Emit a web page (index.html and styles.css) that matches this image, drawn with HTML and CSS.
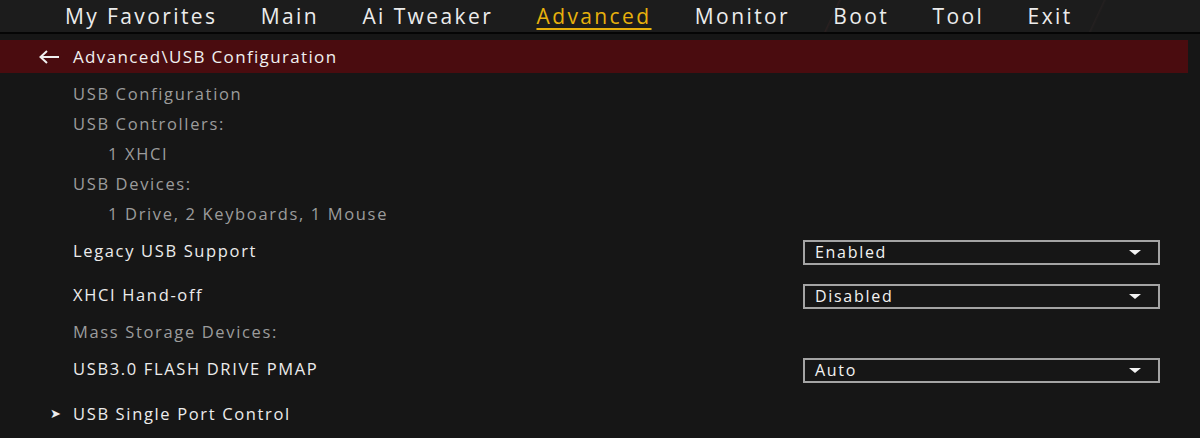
FILE: index.html
```html
<!DOCTYPE html>
<html lang="en">
<head>
  <meta charset="UTF-8">
  <meta name="viewport" content="width=device-width, initial-scale=1.0">
  <title>Advanced - USB Configuration</title>
  <link rel="stylesheet" href="styles.css">
</head>
<body>

  <nav class="tabs">
    <a class="tab">My Favorites</a>
    <a class="tab">Main</a>
    <a class="tab">Ai Tweaker</a>
    <a class="tab active">Advanced</a>
    <a class="tab">Monitor</a>
    <a class="tab">Boot</a>
    <a class="tab">Tool</a>
    <a class="tab">Exit</a>
  </nav>

  <div class="crumb">
    <svg class="back" width="22" height="14" viewBox="0 0 22 14">
      <path d="M21 7H3M9 1L2.5 7L9 13" fill="none" stroke="#f0f0f0" stroke-width="2"/>
    </svg>
    <span>Advanced\USB Configuration</span>
  </div>

  <div class="list">
    <div class="row info">USB Configuration</div>
    <div class="row info">USB Controllers:</div>
    <div class="row info sub">1 XHCI</div>
    <div class="row info">USB Devices:</div>
    <div class="row info sub">1 Drive, 2 Keyboards, 1 Mouse</div>

    <div class="row item">
      <span>Legacy USB Support</span>
      <div class="select">Enabled<i class="caret"></i></div>
    </div>
    <div class="row item">
      <span>XHCI Hand-off</span>
      <div class="select">Disabled<i class="caret"></i></div>
    </div>

    <div class="row info">Mass Storage Devices:</div>
    <div class="row item">
      <span>USB3.0 FLASH DRIVE PMAP</span>
      <div class="select">Auto<i class="caret"></i></div>
    </div>

    <div class="row link">
      <span class="arrow">&#x27A4;</span>
      <span>USB Single Port Control</span>
    </div>
  </div>

</body>
</html>
```

FILE: styles.css
```css
body {
  margin: 0;
  background-color: #161616;
  font-family: "Open Sans", "DejaVu Sans", sans-serif;
  color: #e6e6e6;
  overflow: hidden;
}

.tabs {
  display: flex;
  gap: 43.3px;
  height: 32px;
  padding-left: 65px;
  background-color: #1c1c1c;
  background-image:
    linear-gradient(115deg, transparent 0 760px, #2a2020 761px, transparent 763px),
    linear-gradient(115deg, transparent 0 1000px, #242020 1001px, transparent 1003px);
  border-bottom: 2px solid #050505;
}

.tab {
  font-size: 21px;
  line-height: 32px;
  color: #ececec;
  letter-spacing: 2.4px;
}

.tab.active {
  color: #e8b10c;
  text-decoration: underline;
  text-underline-offset: 4px;
  text-decoration-thickness: 2px;
}

.crumb {
  display: flex;
  align-items: center;
  gap: 13px;
  width: 1150px;
  height: 33px;
  margin-top: 6px;
  padding-left: 38px;
  background-color: #4a0c0f;
  font-size: 17px;
  letter-spacing: 1.35px;
  color: #f0f0f0;
}

.back {
  margin-top: 1px;
}

.list {
  padding-left: 73px;
  padding-right: 40px;
  margin-top: 5px;
}

.row {
  display: flex;
  align-items: center;
  font-size: 16.5px;
  letter-spacing: 1.65px;
}

.info {
  height: 30px;
  color: #9c9c9c;
}

.info.sub {
  padding-left: 35px;
}

.item {
  height: 44px;
  justify-content: space-between;
  color: #ececec;
}

.select {
  display: flex;
  align-items: center;
  justify-content: space-between;
  box-sizing: border-box;
  width: 357px;
  height: 25px;
  margin-top: 4px;
  padding: 0 17px 0 10px;
  border: 2px solid #a4a4a4;
  font-size: 16px;
  letter-spacing: 1.7px;
  color: #f2f2f2;
}

.caret {
  width: 0;
  height: 0;
  border-left: 6px solid transparent;
  border-right: 6px solid transparent;
  border-top: 5px solid #f2f2f2;
}

.link {
  height: 46px;
  margin-left: -23px;
  gap: 9px;
  color: #ececec;
}

.arrow {
  width: 14px;
  font-size: 13px;
  font-family: "DejaVu Sans", sans-serif;
  letter-spacing: 0;
}
```
